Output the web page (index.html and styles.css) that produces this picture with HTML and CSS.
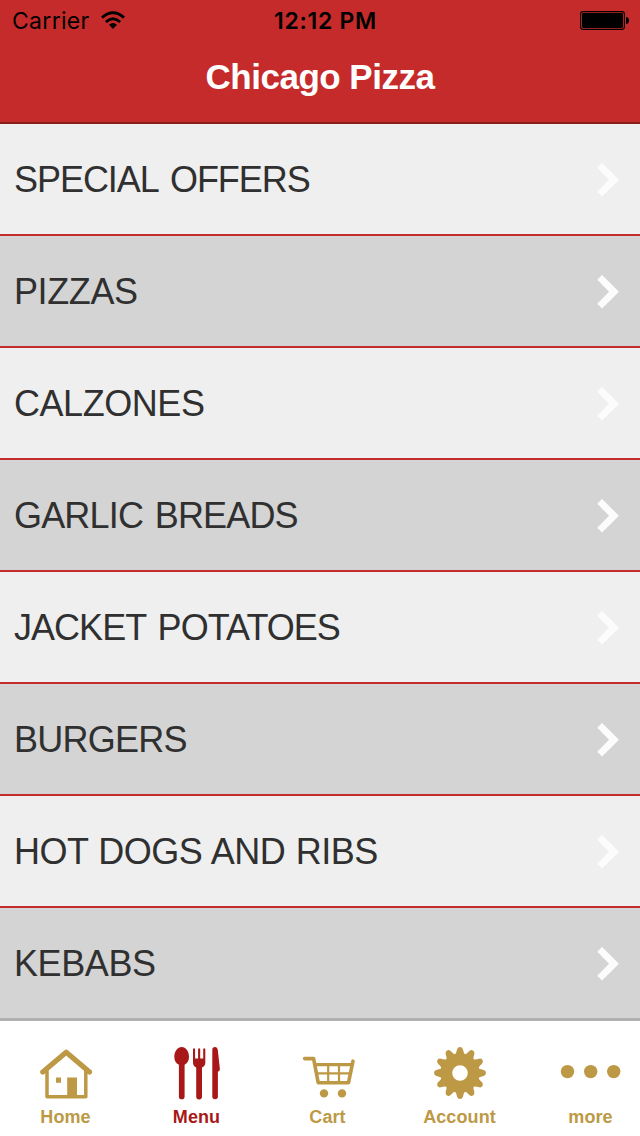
FILE: index.html
```html
<!DOCTYPE html>
<html lang="en">
<head>
<meta charset="utf-8">
<title>Chicago Pizza</title>
<link rel="stylesheet" href="styles.css">
</head>
<body>
<svg class="defs" width="0" height="0" aria-hidden="true">
  <symbol id="chevron" viewBox="0 0 22 34"><path d="M.3 4.7 5 0 22 16.8 5 33.6.3 28.8 12 16.8Z"/></symbol>
  <path id="tooth" d="M-6-16 L-5.100-18.700 Q-4.300-19.200-3.900-20.300 L-2.900-23.700 Q-2.200-26 0-26 Q2.200-26 2.900-23.700 L3.900-20.300 Q4.300-19.200 5.100-18.700 L6-16Z"/>
</svg>
<div class="app">
  <header class="header">
    <div class="status">
      <div class="status-left">
        <span class="carrier">Carrier</span>
        <svg class="wifi" width="26" height="19" viewBox="0 0 26 19">
          <path d="M2 6.6Q13-3 24 6.6M5.9 11Q13 4.7 20.1 11" fill="none" stroke="#000" stroke-width="2.9"/>
          <path d="M9 13.8Q13 10.4 17 13.8L13 18Z"/>
        </svg>
      </div>
      <span class="time">12:12 PM</span>
      <div class="status-right">
        <svg width="50" height="20" viewBox="0 0 50 20">
          <rect x=".6" y=".6" width="43.8" height="17.8" rx="2.6" fill="none" stroke="#000" stroke-width="1.1"/>
          <rect x="2" y="2" width="41" height="15" rx="1.4"/>
          <path d="M46 6Q49 6.4 49 9.5T46 13Z"/>
        </svg>
      </div>
    </div>
    <h1 class="title">Chicago Pizza</h1>
  </header>
  <main class="list">
    <div class="row"><span class="label offers">SPECIAL OFFERS</span><svg class="chevron"><use href="#chevron"/></svg></div>
    <div class="row"><span class="label pizzas">PIZZAS</span><svg class="chevron"><use href="#chevron"/></svg></div>
    <div class="row"><span class="label calzones">CALZONES</span><svg class="chevron"><use href="#chevron"/></svg></div>
    <div class="row"><span class="label breads">GARLIC BREADS</span><svg class="chevron"><use href="#chevron"/></svg></div>
    <div class="row"><span class="label potatoes">JACKET POTATOES</span><svg class="chevron"><use href="#chevron"/></svg></div>
    <div class="row"><span class="label burgers">BURGERS</span><svg class="chevron"><use href="#chevron"/></svg></div>
    <div class="row"><span class="label ribs">HOT DOGS AND RIBS</span><svg class="chevron"><use href="#chevron"/></svg></div>
    <div class="row"><span class="label kebabs">KEBABS</span><svg class="chevron"><use href="#chevron"/></svg></div>
  </main>
  <nav class="tabs">
    <div class="tab">
      <svg class="icon" viewBox="0 0 64 56">
        <path class="line" stroke-width="3.5" d="M13 26V51.8H51.8V26"/>
        <path class="line" stroke-width="5.2" d="M8.8 27 32.2 7.3 55.5 27"/>
        <path d="M22 32.5h5v5.2h-5zM33.2 32.5h9.8V51h-9.8z"/>
      </svg>
      <span class="tab-label">Home</span>
    </div>
    <div class="tab active">
      <svg class="icon" viewBox="0 0 64 56">
        <path d="M16.7 2C21 2 24 6.700 24 11.800C24 16 22.300 18.200 19.600 19.700V51.500a2.850 2.850 0 0 1-5.700 0V19.700C11 18.200 9.300 16 9.300 11.800C9.300 6.700 12.400 2 16.700 2Z"/>
        <path d="M28 4q1-1.600 2.100 0V13.500H33.100V4q1-1.600 2.100 0V13.500H38.200V4q1-1.600 2.100 0V17.500Q40.300 21 37 22.500V51.500a2.900 2.900 0 0 1-5.800 0V22.500Q28 21 28 17.500Z"/>
        <path d="M47.300 4.500Q47.300 2 50 2Q52.300 2 52.800 5L54.900 24Q55 26 52.900 26.800V51.500a2.800 2.800 0 0 1-5.600 0Z"/>
      </svg>
      <span class="tab-label">Menu</span>
    </div>
    <div class="tab">
      <svg class="icon" viewBox="0 0 64 56">
        <path class="line" stroke-width="3.6" d="M8.600 13.600H17.600L22.200 37.700H52.500L57 16.200"/>
        <path class="line" stroke-width="3.2" d="M19.500 19.700H55.500"/>
        <path class="line" stroke-width="2.200" d="M20.500 28.300H54M32.200 20V37M43 20V37"/>
        <circle cx="28" cy="48.400" r="4.200"/><circle cx="46" cy="48.400" r="4.200"/>
      </svg>
      <span class="tab-label">Cart</span>
    </div>
    <div class="tab">
      <svg class="icon" viewBox="0 0 64 56">
        <g transform="translate(32 28)">
          <circle r="13.500" fill="none" stroke="currentColor" stroke-width="11.400"/>
          <use href="#tooth"/><use href="#tooth" transform="rotate(30)"/><use href="#tooth" transform="rotate(60)"/><use href="#tooth" transform="rotate(90)"/><use href="#tooth" transform="rotate(120)"/><use href="#tooth" transform="rotate(150)"/><use href="#tooth" transform="rotate(180)"/><use href="#tooth" transform="rotate(210)"/><use href="#tooth" transform="rotate(240)"/><use href="#tooth" transform="rotate(270)"/><use href="#tooth" transform="rotate(300)"/><use href="#tooth" transform="rotate(330)"/>
        </g>
      </svg>
      <span class="tab-label">Account</span>
    </div>
    <div class="tab">
      <svg class="icon" viewBox="0 0 64 56">
        <circle cx="8.500" cy="26.600" r="6.700"/><circle cx="31.700" cy="26.600" r="6.700"/><circle cx="54.700" cy="26.600" r="6.700"/>
      </svg>
      <span class="tab-label">more</span>
    </div>
  </nav>
</div>
</body>
</html>
```
FILE: styles.css
```css
* { box-sizing: border-box; }
body { margin: 0; font-family: "Liberation Sans", Arial, sans-serif; }
.defs { display: block; }
.app {
  width: 640px;
  height: 1136px;
  display: flex;
  flex-direction: column;
  overflow: hidden;
  background: #fff;
}
.header {
  height: 124px;
  flex: none;
  background: #c62b2b;
  border-bottom: 2px solid #8a1e1e;
}
.status {
  height: 42px;
  display: grid;
  grid-template-columns: 200px 1fr 200px;
  align-items: center;
  padding: 0 10px 0 12px;
  font-family: Inter, sans-serif;
  font-size: 23px;
  line-height: 42px;
  color: #000;
}
.status-left { display: flex; align-items: center; gap: 11px; }
.carrier { width: 76.5px; white-space: nowrap; letter-spacing: 0.3px; }
.wifi { margin-bottom: 2px; }
.time { padding-left: 9px; text-align: center; font-weight: 600; white-space: nowrap; letter-spacing: 0.7px; }
.status-right { display: flex; justify-content: flex-end; }
.title {
  margin: 15px 0 0;
  text-align: center;
  font-size: 35px;
  line-height: 40px;
  font-weight: bold;
  letter-spacing: -0.5px;
  color: #fff;
}
.list { flex: none; height: 894px; }
.row {
  height: 112px;
  display: flex;
  align-items: center;
  justify-content: space-between;
  padding: 2px 21px 0 14px;
  background: #efefef;
  border-bottom: 2px solid #c62b2b;
}
.row:nth-child(even) { background: #d4d4d4; }
.row:last-child { height: 110px; border-bottom: 0; }
.label { font-size: 36px; line-height: 44px; color: #303030; white-space: nowrap; }
.offers { letter-spacing: -1.04px; word-spacing: 3.5px; }
.pizzas { letter-spacing: -0.4px; }
.calzones { letter-spacing: -0.45px; }
.breads { letter-spacing: -0.83px; word-spacing: 2.5px; }
.potatoes { letter-spacing: -0.97px; word-spacing: 3px; }
.burgers { letter-spacing: -0.75px; }
.ribs { letter-spacing: -0.55px; word-spacing: 1.2px; }
.kebabs { letter-spacing: -0.4px; }
.chevron { width: 22px; height: 34px; fill: #fcfcfc; }
.tabs {
  height: 118px;
  flex: none;
  display: grid;
  grid-template-columns: 132px 130px 132px 132px 130px;
  border-top: 3px solid #b0b0b0;
  background: #fff;
}
.tab {
  display: flex;
  flex-direction: column;
  align-items: center;
  padding-top: 24px;
  color: #bd9945;
}
.active { color: #a81818; }
.icon { width: 64px; height: 56px; flex: none; fill: currentColor; }
.line { fill: none; stroke: currentColor; stroke-linecap: round; stroke-linejoin: round; }
.tab-label {
  margin-top: 5px;
  padding-right: 1px;
  font-size: 18px;
  line-height: 22px;
  font-weight: bold;
  letter-spacing: 0.1px;
}
```
